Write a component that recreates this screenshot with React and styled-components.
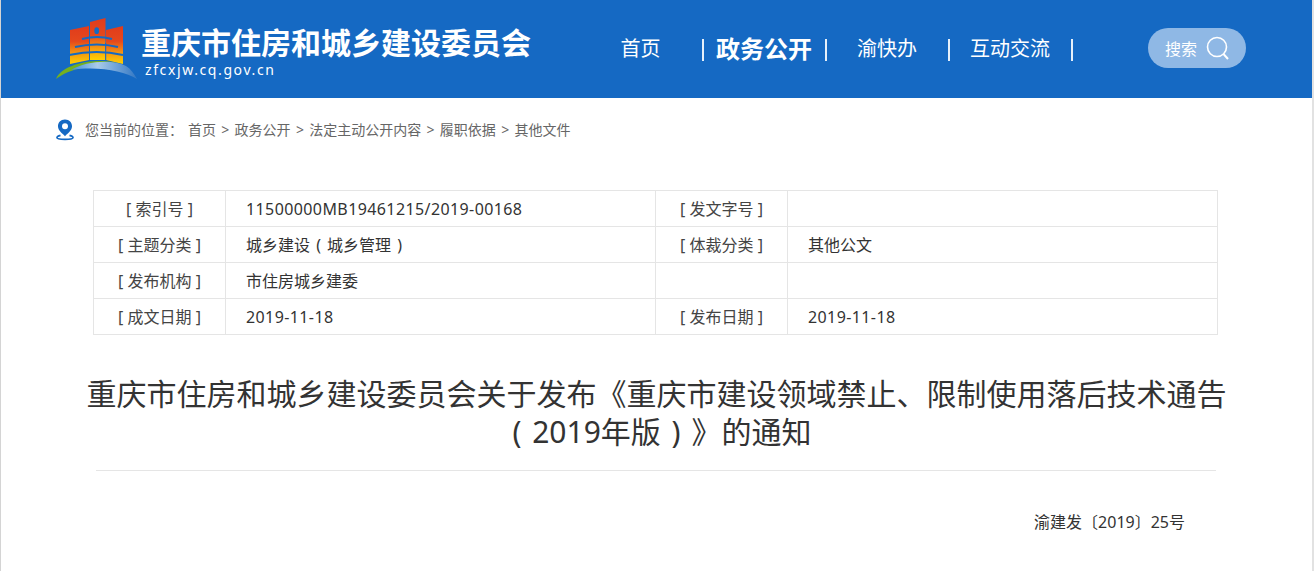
import React from "react";
import styled, { createGlobalStyle } from "styled-components";

const Global = createGlobalStyle`
  html, body { margin: 0; padding: 0; background: #fff; height: 100%; overflow: hidden; }
  body { font-family: "Noto Sans", "Noto Sans CJK SC", sans-serif; }
`;
const Page = styled.div`
  width: 1314px; height: 571px; box-sizing: border-box; overflow: hidden;
  border-left: 1px solid #d4d4d4; border-right: 2px solid #e2e2e2;
`;
const Header = styled.header`
  height: 98px; background: #1569c3; display: flex; align-items: flex-start; color: #fff;
`;
const Brand = styled.div`
  display: flex; width: 560px; margin-left: 55px; padding-top: 17px; box-sizing: border-box;
`;
const BrandText = styled.div`
  margin-left: 3px; padding-top: 8px;
`;
const BrandTitle = styled.div`
  font-size: 30px; line-height: 36px; font-weight: 700; white-space: nowrap;
`;
const BrandUrl = styled.div`
  font-size: 14px; line-height: 16px; letter-spacing: 1.6px; margin: 1px 0 0 4px;
`;
const Nav = styled.nav`
  display: flex; align-items: center; height: 98px;
`;
const NavItem = styled.a`
  display: block; width: ${p => p.$w}px; font-size: ${p => (p.$active ? 24 : 20)}px;
  font-weight: ${p => (p.$active ? 700 : 400)}; line-height: 26px; white-space: nowrap;
  box-sizing: border-box; padding-left: ${p => p.$pad}px;
`;
const NavBar = styled.span`
  display: block; width: 2px; height: 22px; background: #e6f0fa; flex: none; margin-top: 2px;
`;
const Search = styled.div`
  margin: 0 0 2px 75px; width: 98px; height: 40px; border-radius: 20px; background: #8fb8e5;
  display: flex; align-items: center; padding-left: 17px; box-sizing: border-box; font-size: 16px; gap: 8px;
`;
const Crumbs = styled.div`
  display: flex; align-items: center; height: 26px; margin: 18px 0 0 55px;
  font-size: 14px; color: #666; white-space: nowrap;
`;
const CrumbLabel = styled.span`
  margin: 0 5px 0 11px;
`;
const Sep = styled.span`
  margin: 0 5.3px;
`;
const Table = styled.table`
  border-collapse: collapse; table-layout: fixed; width: 1124px; margin: 48px 0 0 92px; font-size: 16px; color: #333;
`;
const Cell = styled.td`
  border: 1px solid #e5e5e5; height: 36px; padding: 0 0 ${p => (p.$latin ? 0 : 2)}px 20px; box-sizing: border-box;
  width: ${p => p.$w}px; white-space: nowrap; word-spacing: 2px; letter-spacing: ${p => (p.$latin ? "0.4px" : "0")};
`;
const Head = styled(Cell)`
  padding: 0 0 2px; text-align: center; color: #444; word-spacing: 0;
`;
const Title = styled.h1`
  margin: 40px auto 0; width: 1150px; text-align: center; font-size: 30px; line-height: 38px;
  font-weight: 400; color: #333; word-spacing: 3px;
`;
const Rule = styled.div`
  width: 1120px; height: 1px; background: #e5e5e5; margin: 19px 0 0 95px;
`;
const DocNo = styled.div`
  margin: 41px 127px 0 0; text-align: right; font-size: 16px; line-height: 20px; color: #333;
`;

const Logo = () => (
  <svg width="82" height="64" viewBox="0 0 82 64">
    <defs>
      <linearGradient id="g" x1="0" y1="0" x2="0" y2="1">
        <stop offset="0" stopColor="#e03c1c" />
        <stop offset="0.4" stopColor="#e5481c" />
        <stop offset="0.72" stopColor="#f59a10" />
        <stop offset="1" stopColor="#ffd000" />
      </linearGradient>
      <linearGradient id="b" x1="0" y1="0" x2="1" y2="0">
        <stop offset="0" stopColor="#3f8ed8" />
        <stop offset="0.4" stopColor="#a9cbe9" />
        <stop offset="1" stopColor="#3277c4" />
      </linearGradient>
    </defs>
    <path d="M14 13 L33 9 V43 L14 47Z" fill="url(#g)" />
    <path d="M34 5 L49.5 1 V43 H34Z" fill="url(#g)" />
    <path d="M50 13 L67 9 V47 L50 43Z" fill="url(#g)" />
    <ellipse cx="40.7" cy="13.7" rx="2.4" ry="3.4" fill="#1569c3" />
    <g fill="none" stroke="#1569c3" strokeWidth="2">
      <path d="M26 22 Q41 18 56 22" />
      <path d="M19 30 Q41 25 62 30" />
      <path d="M13 38 Q41 32 67 38" />
    </g>
    <g stroke="#1569c3" strokeWidth="1"><path d="M33.5 26V45M49.7 26V45" /></g>
    <path d="M0 62 C5 50 24 45 40 44 C50 43.5 60 45 66 48 C50 46 16 49 0 62Z" fill="#74b01e" />
    <path d="M15 53 C30 44 56 42 70 49 C75 52 78 57 81 62 C68 54 42 49 15 53Z" fill="url(#b)" />
  </svg>
);

const Pin = () => (
  <svg width="18" height="23" viewBox="0 0 20 24" fill="none">
    <path d="M10 1 C5 1 2.2 4.6 2.2 8.5 C2.2 13 7 16.5 10 19.5 C13 16.5 17.8 13 17.8 8.5 C17.8 4.6 15 1 10 1Z" fill="#1569c3" />
    <circle cx="10" cy="8.4" r="3.3" fill="#fff" />
    <path d="M5 18.5 C2 19.3 1 20.3 1 21 C1 22.3 4 23 10 23 C16 23 19 22.3 19 21 C19 20.3 18 19.3 15 18.5" stroke="#1569c3" strokeWidth="1.8" />
  </svg>
);

const SearchIcon = () => (
  <svg width="26" height="26" viewBox="0 0 26 26" fill="none" stroke="#fff">
    <circle cx="12" cy="12" r="9.5" strokeWidth="1.6" />
    <path d="M18.5 19 L23 24" strokeWidth="2" />
  </svg>
);

const rows = [
  ["[ 索引号 ]", "11500000MB19461215/2019-00168", "[ 发文字号 ]", "", true],
  ["[ 主题分类 ]", "城乡建设 ( 城乡管理 )", "[ 体裁分类 ]", "其他公文"],
  ["[ 发布机构 ]", "市住房城乡建委", "", ""],
  ["[ 成文日期 ]", "2019-11-18", "[ 发布日期 ]", "2019-11-18", true],
];
const crumbs = ["首页", "政务公开", "法定主动公开内容", "履职依据", "其他文件"];

export default function App() {
  return (
    <Page>
      <Global />
      <Header>
        <Brand>
          <Logo />
          <BrandText>
            <BrandTitle>重庆市住房和城乡建设委员会</BrandTitle>
            <BrandUrl>zfcxjw.cq.gov.cn</BrandUrl>
          </BrandText>
        </Brand>
        <Nav>
          <NavItem $w={86} $pad={4.5}>首页</NavItem>
          <NavBar />
          <NavItem $w={121} $pad={12} $active>政务公开</NavItem>
          <NavBar />
          <NavItem $w={121} $pad={30}>渝快办</NavItem>
          <NavBar />
          <NavItem $w={121} $pad={20}>互动交流</NavItem>
          <NavBar />
          <Search>搜索<SearchIcon /></Search>
        </Nav>
      </Header>
      <Crumbs>
        <Pin />
        <CrumbLabel>您当前的位置：</CrumbLabel>
        {crumbs.map((c, i) => (
          <React.Fragment key={c}>
            {i > 0 && <Sep>&gt;</Sep>}
            <span>{c}</span>
          </React.Fragment>
        ))}
      </Crumbs>
      <Table>
        <tbody>
          {rows.map(r => (
            <tr key={r[0]}>
              <Head $w={132}>{r[0]}</Head>
              <Cell $w={430} $latin={r[4]}>{r[1]}</Cell>
              <Head $w={132}>{r[2]}</Head>
              <Cell $w={430} $latin={r[4]}>{r[3]}</Cell>
            </tr>
          ))}
        </tbody>
      </Table>
      <Title>重庆市住房和城乡建设委员会关于发布《重庆市建设领域禁止、限制使用落后技术通告 {"\u00a0"}( 2019年版 ) 》的通知</Title>
      <Rule />
      <DocNo>渝建发〔2019〕25号</DocNo>
    </Page>
  );
}
